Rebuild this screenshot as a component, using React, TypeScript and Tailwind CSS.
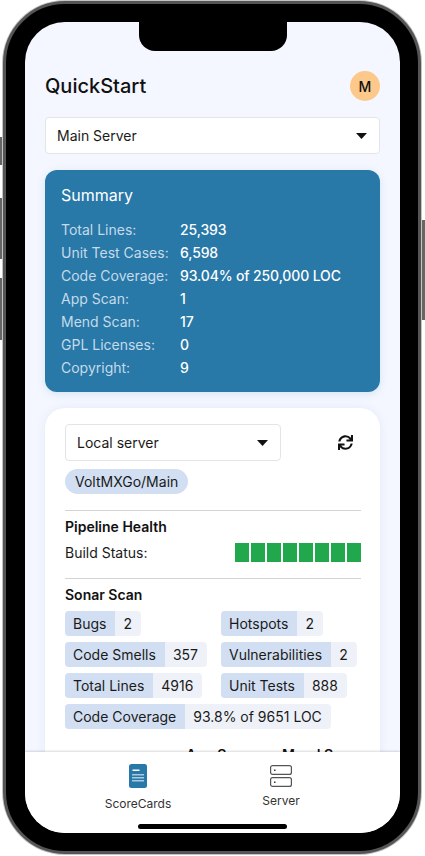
import { FaSync } from 'react-icons/fa';

const summaryRows = [
  ['Total Lines:', '25,393'],
  ['Unit Test Cases:', '6,598'],
  ['Code Coverage:', '93.04% of 250,000 LOC'],
  ['App Scan:', '1'],
  ['Mend Scan:', '17'],
  ['GPL Licenses:', '0'],
  ['Copyright:', '9'],
];

function Caret() {
  return (
    <svg width="11" height="6" viewBox="0 0 11 6" className="shrink-0">
      <path d="M0 0H11L5.5 6Z" fill="#111" />
    </svg>
  );
}

function Tag({ label, value }: { label: string; value: string }) {
  return (
    <div className="flex h-[25px] w-fit overflow-hidden rounded-[4px] bg-[#eef2f8] text-[14px] leading-[25px] text-[#1a1a1a]">
      <span className="bg-[#d2dff2] pl-[8px] pr-[9px]">{label}</span>
      <span className="pl-[8px] pr-[9px]">{value}</span>
    </div>
  );
}

export default function App() {
  return (
    <div className="relative h-[856px] w-[425px] overflow-hidden bg-white pt-[1px] font-['Inter',sans-serif]">
      {/* side buttons */}
      <div className="absolute left-0 top-[137px] h-[28px] w-[4px] bg-[#666]" />
      <div className="absolute left-0 top-[198px] h-[61px] w-[4px] bg-[#666]" />
      <div className="absolute left-0 top-[278px] h-[62px] w-[4px] bg-[#666]" />
      <div className="absolute right-0 top-[220px] h-[100px] w-[4px] bg-[#666]" />

      <div className="relative ml-[3px] h-[853px] w-[418px] rounded-[62px] border-[3px] border-[#555] bg-black pl-[19px] pt-[18px] shadow-[0_0_0_1px_#c4c4c4]">
        <div className="relative flex h-[811px] w-[375px] flex-col overflow-hidden rounded-[40px] bg-[#f4f7ff]">
          {/* notch */}
          <div className="absolute left-[114px] top-0 z-20 h-[29px] w-[148px] rounded-b-[16px] bg-black" />

          <div className="min-h-0 flex-1 overflow-hidden px-[20px] pt-[49px]">
            <div className="flex h-[30px] items-center justify-between">
              <h1 className="text-[20px] font-[450] text-[#111]">QuickStart</h1>
              <div className="flex h-[30px] w-[30px] items-center justify-center rounded-full bg-[#fdc98a] text-[14px] font-medium text-[#111]">
                M
              </div>
            </div>

            <div className="mt-[16px] flex h-[37px] items-center justify-between rounded-[4px] border border-[#e2e4e8] bg-white pl-[11px] pr-[12px] text-[14px] text-[#1a1a1a]">
              <span>Main Server</span>
              <Caret />
            </div>

            <div className="mt-[16px] h-[222px] rounded-[12px] bg-[#2878a8] px-[16px] pt-[14px] shadow-[0_2px_8px_rgba(40,120,168,0.15)]">
              <h2 className="text-[16px] leading-[22px] text-white">Summary</h2>
              <div className="mt-[12px] flex flex-col">
                {summaryRows.map(([label, value]) => (
                  <div key={label} className="flex h-[23px] items-center text-[14px]">
                    <span className="w-[119px] text-[#c5dbe9]">{label}</span>
                    <span className="font-medium tracking-[-0.01em] text-white">{value}</span>
                  </div>
                ))}
              </div>
            </div>

            <div className="mt-[16px] rounded-t-[20px] bg-white pb-[20px] pl-[20px] pr-[19px] pt-[16px] shadow-[0_0_10px_rgba(120,140,200,0.12)]">
              <div className="flex items-center justify-between pr-[8px]">
                <div className="flex h-[37px] w-[216px] items-center justify-between rounded-[4px] border border-[#e2e4e8] bg-white pl-[11px] pr-[12px] text-[14px] text-[#1a1a1a]">
                  <span>Local server</span>
                  <Caret />
                </div>
                <FaSync size={15} color="#111" />
              </div>

              <div className="mt-[8px] flex h-[25px] w-fit items-center rounded-full bg-[#d2dff2] px-[10px] text-[14px] text-[#1a1a1a]">
                VoltMXGo/Main
              </div>

              <div className="mt-[16px] border-t border-[#d4d4d4] pt-[7px]">
                <h3 className="text-[14px] font-semibold leading-[17px] text-[#111]">Pipeline Health</h3>
                <div className="mt-[8px] flex h-[19px] items-center justify-between">
                  <span className="text-[14px] text-[#1a1a1a]">Build Status:</span>
                  <div className="flex gap-[2px]">
                    {[0, 1, 2, 3, 4, 5, 6, 7].map((i) => (
                      <div key={i} className="h-[19px] w-[14px] bg-[#21a84d]" />
                    ))}
                  </div>
                </div>
              </div>

              <div className="mt-[16px] border-t border-[#d4d4d4] pt-[7px]">
                <h3 className="text-[14px] font-semibold leading-[17px] text-[#111]">Sonar Scan</h3>
                <div className="mt-[8px] grid grid-cols-[156px_1fr] gap-y-[6px]">
                  <Tag label="Bugs" value="2" />
                  <Tag label="Hotspots" value="2" />
                  <Tag label="Code Smells" value="357" />
                  <Tag label="Vulnerabilities" value="2" />
                  <Tag label="Total Lines" value="4916" />
                  <Tag label="Unit Tests" value="888" />
                  <div className="col-span-2">
                    <Tag label="Code Coverage" value="93.8% of 9651 LOC" />
                  </div>
                </div>
                <div className="mt-[15px] flex pl-[121px] text-[14px] font-semibold text-[#111]">
                  <span className="w-[96px]">App Scan</span>
                  <span>Mend Scan</span>
                </div>
              </div>
            </div>
          </div>

          {/* tab bar */}
          <div className="relative z-10 flex h-[81px] shrink-0 bg-white shadow-[0_-1px_2px_rgba(0,0,0,0.15)]">
            <div className="flex w-[226px] flex-col items-center pt-[12px]">
              <svg width="18" height="24" viewBox="0 0 18 24">
                <rect width="18" height="24" rx="2.5" fill="#2878a8" />
                <rect x="3.5" y="5.5" width="7" height="1.5" fill="#fff" />
                <g fill="#a9cbe0">
                  <rect x="3" y="10" width="12" height="1.5" />
                  <rect x="3" y="13" width="12" height="1.5" />
                  <rect x="3" y="16" width="12" height="1.5" />
                </g>
              </svg>
              <span className="mt-[8px] text-[12px] leading-[15px] text-[#333]">ScoreCards</span>
            </div>
            <div className="flex w-[60px] flex-col items-center pt-[13px]">
              <svg width="22" height="22" viewBox="0 0 22 22" fill="none" stroke="#555" strokeWidth="1.2">
                <rect x="0.6" y="0.6" width="20.8" height="8.8" rx="2" />
                <rect x="0.6" y="12.6" width="20.8" height="8.8" rx="2" />
                <rect x="4" y="4.5" width="1.5" height="1.5" fill="#333" stroke="none" />
                <rect x="4" y="16.5" width="1.5" height="1.5" fill="#333" stroke="none" />
              </svg>
              <span className="mt-[6px] text-[12px] leading-[15px] text-[#333]">Server</span>
            </div>
            <div className="absolute bottom-[4px] left-[113px] h-[5px] w-[149px] rounded-full bg-black" />
          </div>
        </div>
      </div>
    </div>
  );
}
